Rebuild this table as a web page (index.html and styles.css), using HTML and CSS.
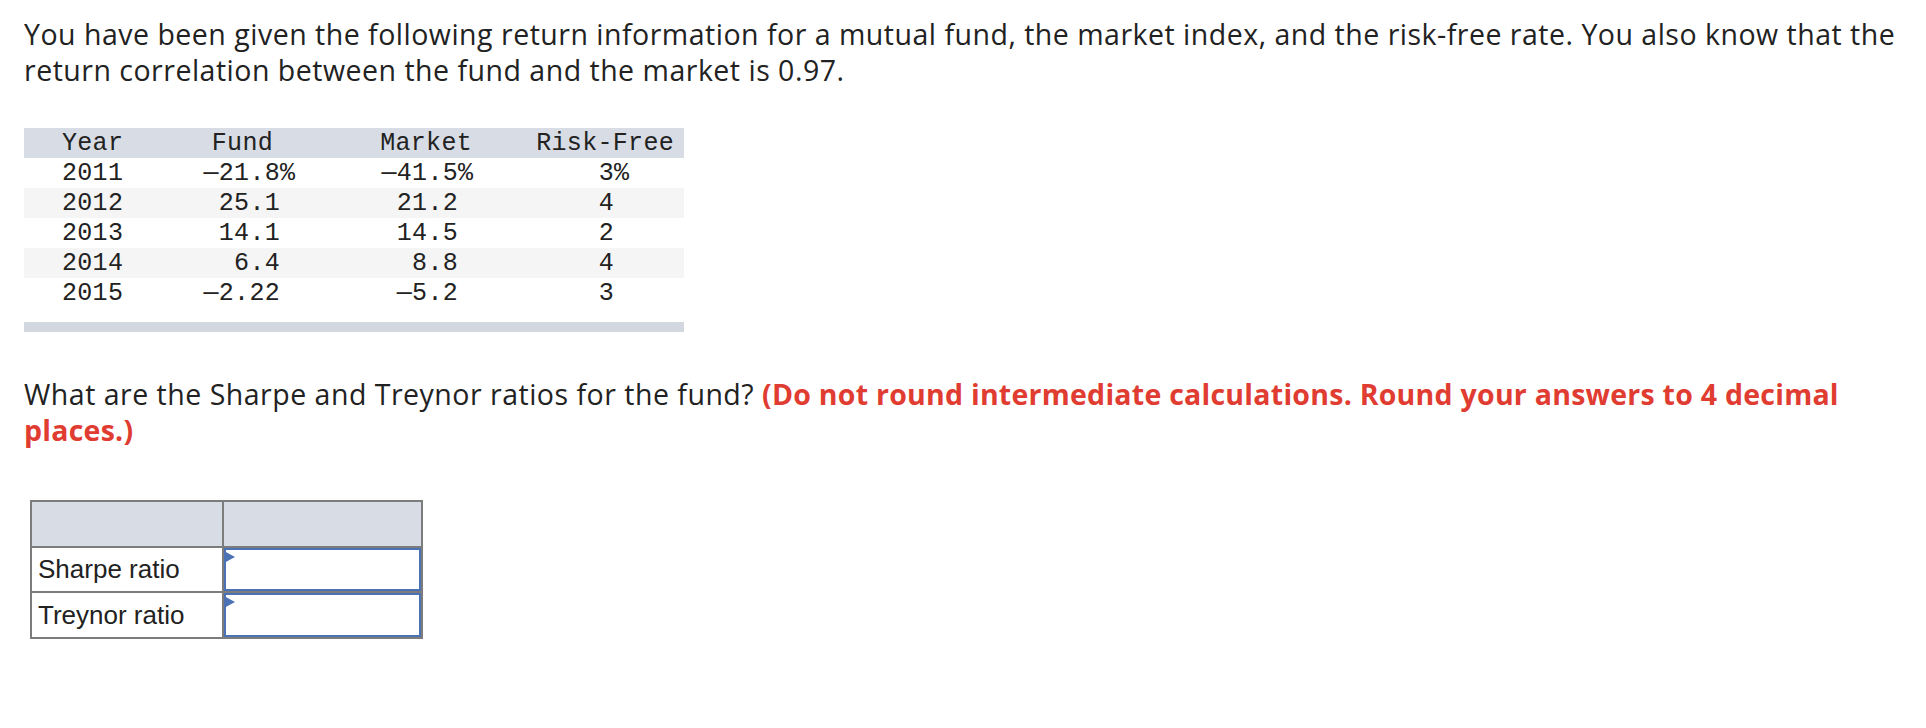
FILE: index.html
```html
<!DOCTYPE html>
<html lang="en">
<head>
<meta charset="utf-8">
<title>Sharpe and Treynor ratios</title>
<link rel="stylesheet" href="styles.css">
</head>
<body>
<main class="page">
  <p class="intro">You have been given the following return information for a mutual fund, the market index, and the risk-free rate. You also know that the return correlation between the fund and the market is 0.97.</p>

  <table class="data">
    <colgroup>
      <col class="c1"><col class="c2"><col class="c3"><col class="c4">
    </colgroup>
    <thead>
      <tr>
        <th class="year">Year</th>
        <th class="fund">Fund</th>
        <th class="market">Market</th>
        <th class="rf">Risk-Free</th>
      </tr>
    </thead>
    <tbody>
      <tr><td class="year">2011</td><td class="fund">—21.8<span class="pct">%</span></td><td class="market">—41.5<span class="pct">%</span></td><td class="rf">3<span class="pct">%</span></td></tr>
      <tr class="alt"><td class="year">2012</td><td class="fund">25.1</td><td class="market">21.2</td><td class="rf">4</td></tr>
      <tr><td class="year">2013</td><td class="fund">14.1</td><td class="market">14.5</td><td class="rf">2</td></tr>
      <tr class="alt"><td class="year">2014</td><td class="fund">6.4</td><td class="market">8.8</td><td class="rf">4</td></tr>
      <tr><td class="year">2015</td><td class="fund">—2.22</td><td class="market">—5.2</td><td class="rf">3</td></tr>
    </tbody>
  </table>
  <div class="table-foot"></div>

  <p class="question">What are the Sharpe and Treynor ratios for the fund? <strong class="note">(Do not round intermediate calculations. Round your answers to 4 decimal</strong> <strong class="note">places.)</strong></p>

  <div class="answers">
    <div class="cell head"></div>
    <div class="cell head"></div>
    <div class="cell label">Sharpe ratio</div>
    <div class="cell field"><span class="flag"></span></div>
    <div class="cell label">Treynor ratio</div>
    <div class="cell field"><span class="flag"></span></div>
  </div>
</main>
</body>
</html>
```

FILE: styles.css
```css
html, body {
  margin: 0;
  padding: 0;
  background: #ffffff;
}

.page {
  padding: 16px 0 0 24px;
  color: #222222;
  font-family: "Open Sans", "Liberation Sans", sans-serif;
}

.intro,
.question {
  margin: 0;
  font-size: 28.5px;
  line-height: 36px;
  letter-spacing: 0.5px;
}

.data {
  margin-top: 40px;
  border-collapse: collapse;
  width: 660px;
  table-layout: fixed;
  font-family: "Liberation Mono", "DejaVu Sans Mono", monospace;
  font-size: 25px;
  letter-spacing: 0.3px;
  color: #222222;
}

.c1 { width: 126px; }
.c2 { width: 180px; }
.c3 { width: 170px; }
.c4 { width: 184px; }

.data th,
.data td {
  height: 30px;
  padding: 1px 0 0 0;
  box-sizing: border-box;
  font-weight: normal;
  text-align: right;
  line-height: 29px;
  white-space: nowrap;
}

.data thead tr { background: #d8dce4; }
.data tr.alt { background: #f5f5f5; }

.data .year { text-align: left; padding-left: 38px; }
.data th.fund { padding-right: 57px; }
.data td.fund { padding-right: 50px; }
.data th.market { padding-right: 28px; }
.data td.market { padding-right: 42px; }
.data th.rf { padding-right: 10px; }
.data td.rf { padding-right: 70px; }

.pct { margin-right: -15.3px; }

.table-foot {
  width: 660px;
  height: 10px;
  margin-top: 14px;
  background: #d3d7df;
}

.question {
  margin-top: 44px;
}

.note {
  color: #e03c31;
  font-weight: 700;
  letter-spacing: 0.25px;
}

.answers {
  display: grid;
  grid-template-columns: 190px 197px;
  grid-template-rows: 44px 43px 44px;
  gap: 2px;
  padding: 2px;
  width: max-content;
  margin: 52px 0 0 6px;
  background: #7c7c7c;
  font-family: "Liberation Sans", Arial, sans-serif;
  font-size: 26px;
  color: #222222;
}

.cell {
  background: #ffffff;
}

.cell.head {
  background: #d8dce4;
}

.cell.label {
  display: flex;
  align-items: center;
  padding-left: 6px;
}

.cell.field {
  position: relative;
  box-shadow: inset 0 0 0 2px #4a72b4;
}

.flag {
  position: absolute;
  left: 0;
  top: 3px;
  width: 0;
  height: 0;
  border-top: 6px solid transparent;
  border-bottom: 6px solid transparent;
  border-left: 11px solid #4a72b4;
}
```
